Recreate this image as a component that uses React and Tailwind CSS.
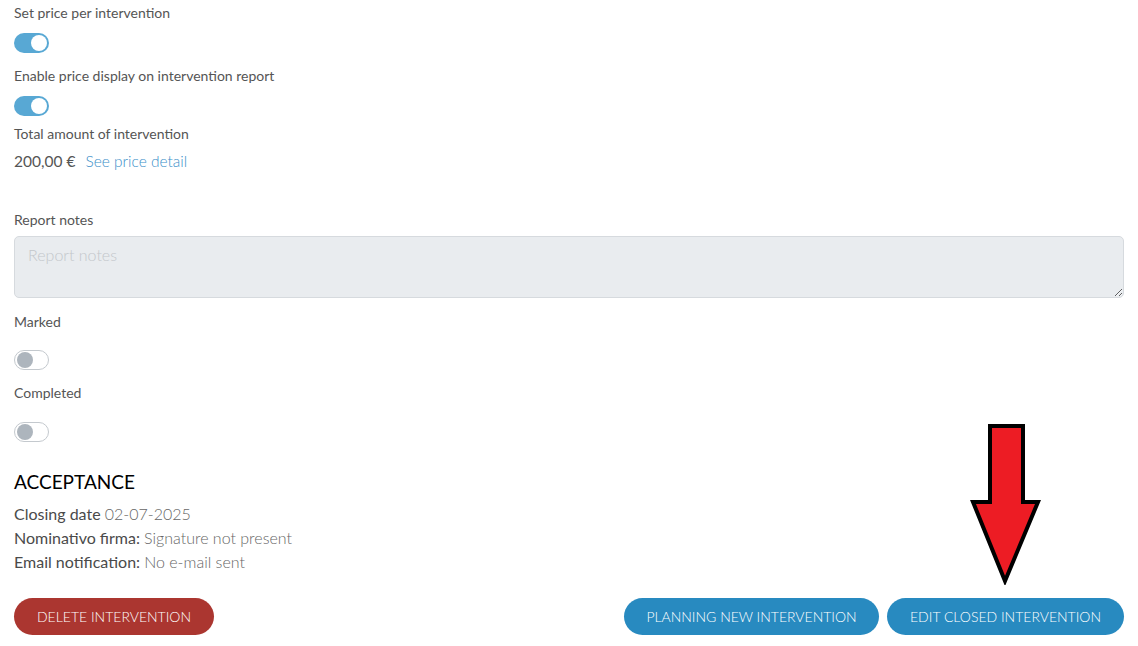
import React from 'react';

const Toggle = ({ on }) => (
  <div
    className={`w-[35px] h-[20px] rounded-full flex items-center px-[2px] ${
      on ? 'bg-[#58a8d4] justify-end' : 'bg-white border border-[#c4c9ce] justify-start'
    }`}
  >
    <div className={`w-[16px] h-[16px] rounded-full ${on ? 'bg-white' : 'bg-[#adb5bd]'}`} />
  </div>
);

const Label = ({ children, className = '' }) => (
  <p className={`text-[14px] leading-5 text-[#555] ${className}`}>{children}</p>
);

const InfoRow = ({ label, value }) => (
  <p className="text-[16px] leading-6 text-[#666]">
    <span className="text-[#4a4a4a]">{label}</span> <span className="font-light">{value}</span>
  </p>
);

const App = () => {
  return (
    <div className="relative w-[1138px] h-[646px] bg-white px-[14px] pt-[3px] font-['Lato','Open_Sans',sans-serif]">
      {/* Pricing */}
      <Label>Set price per intervention</Label>
      <div className="mt-[10px]"><Toggle on /></div>
      <Label className="mt-[13px]">Enable price display on intervention report</Label>
      <div className="mt-[10px]"><Toggle on /></div>
      <Label className="mt-[8px]">Total amount of intervention</Label>
      <div className="mt-[6px] flex items-center gap-[10px] text-[16px] leading-[22px]">
        <span className="text-[#555] text-[15.5px]">200,00 €</span>
        <a className="text-[#3a8fc9] font-light text-[15.5px] cursor-pointer">See price detail</a>
      </div>

      {/* Notes */}
      <Label className="mt-[38px]">Report notes</Label>
      <textarea
        placeholder="Report notes"
        className="mt-[6px] block w-full h-[62px] bg-[#e9ecef] border border-[#d6dade] rounded-[5px] px-[13px] py-[6px] text-[16px] font-light text-[#555] placeholder:text-[#c3c7cb] outline-none"
      />

      <Label className="mt-[14px]">Marked</Label>
      <div className="mt-[18px]"><Toggle /></div>
      <Label className="mt-[13px]">Completed</Label>
      <div className="mt-[19px]"><Toggle /></div>

      {/* Acceptance */}
      <h3 className="mt-[27px] text-[19px] leading-[26px] text-black">ACCEPTANCE</h3>
      <div className="mt-[7px]">
        <InfoRow label="Closing date" value="02-07-2025" />
        <InfoRow label="Nominativo firma:" value="Signature not present" />
        <InfoRow label="Email notification:" value="No e-mail sent" />
      </div>

      {/* Actions */}
      <div className="mt-[24px] flex items-center justify-between">
        <button className="w-[200px] h-[37px] rounded-full bg-[#ab3630] text-white text-[14px] font-light uppercase">
          Delete intervention
        </button>
        <div className="flex gap-[8px]">
          <button className="w-[255px] h-[37px] rounded-full bg-[#288ac0] text-white text-[14px] font-light uppercase">
            Planning new intervention
          </button>
          <button className="w-[237px] h-[37px] rounded-full bg-[#288ac0] text-white text-[14px] font-light uppercase">
            Edit closed intervention
          </button>
        </div>
      </div>

      {/* annotation arrow */}
      <svg className="absolute left-[970px] top-[423px]" width="72" height="162" viewBox="0 0 72 162">
        <polygon
          points="20,3 53,3 53,79 68,79 35,158 3,79 20,79"
          fill="#ed1c24"
          stroke="#000"
          strokeWidth="4"
          strokeLinejoin="miter"
        />
      </svg>
    </div>
  );
};

export default App;
